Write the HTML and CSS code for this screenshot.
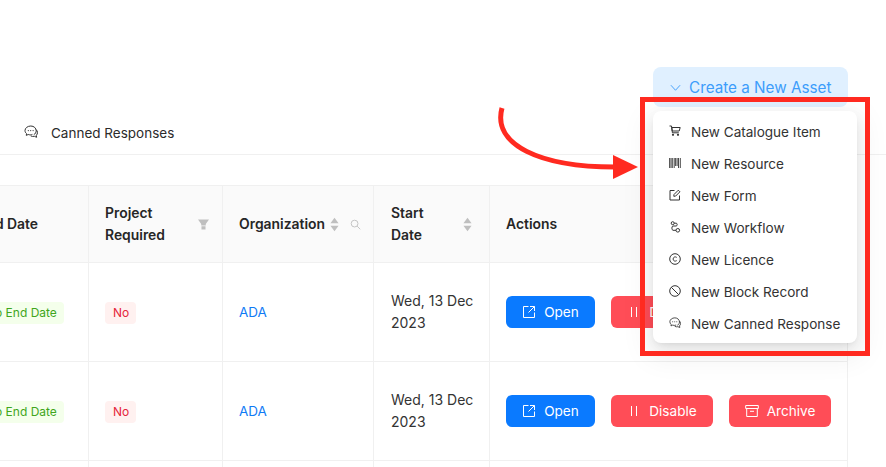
FILE: index.html
```html
<!DOCTYPE html>
<html lang="en">
<head>
<meta charset="utf-8">
<title>Assets</title>
<link rel="stylesheet" href="styles.css">
</head>
<body>
<div class="page">
  <div class="toolbar">
    <button class="create-btn">
      <svg class="chev" viewBox="0 0 12 12"><path d="M1 3.500 6 9l5-5.500"/></svg>
      <span>Create a New Asset</span>
    </button>
  </div>
  <div class="tabs">
    <div class="tab">
      <svg class="ico tab-ico" viewBox="0 0 14 14"><path d="M9.800 9.600C11.400 8.900 12.200 7.400 12.200 5.800 12.200 3.200 10 1 6.800 1S1 3.100 1 5.500c0 1.300.6 2.400 1.500 3.100l-.2 1.800 1.900-.9c1.500.5 3 .4 4.200-.1"/><path d="M12.200 4.700c.8.700 1.300 1.800 1.300 2.900 0 1.100-.5 2-1.200 2.700l.3 2-2.200-1c-1.200.3-2.500.2-3.700-.4"/><path class="dots" d="M4.300 5.600h.01M6.700 5.600h.01M9.100 5.600h.01"/></svg>
      <span>Canned Responses</span>
    </div>
  </div>
  <div class="table-clip">
    <table class="grid">
      <colgroup>
        <col class="c-end"><col class="c-proj"><col class="c-org"><col class="c-start"><col class="c-act">
      </colgroup>
      <thead>
        <tr>
          <th>End Date</th>
          <th>
            <div class="th-flex"><span class="th-wrap">Project Required</span>
              <svg class="funnel" viewBox="0 0 12 12"><path d="M0 .5h12L8.500 5.500v1.500h-5V5.500zM3.800 8h4.400v3.500H3.800z"/></svg>
            </div>
          </th>
          <th>
            <div class="th-flex th-org"><span>Organization</span>
              <svg class="sort" viewBox="0 0 10 16"><path d="M5 .5 9.500 6.500h-9zM5 15.500.5 9.500h9z"/></svg>
              <svg class="search" viewBox="0 0 12 12"><circle cx="5" cy="5" r="3.700"/><path d="m7.800 7.800 3.400 3.400"/></svg>
            </div>
          </th>
          <th class="cell-start">
            <div class="th-flex"><span class="th-wrap">Start Date</span>
              <svg class="sort" viewBox="0 0 10 16"><path d="M5 .5 9.500 6.500h-9zM5 15.500.5 9.500h9z"/></svg>
            </div>
          </th>
          <th>Actions</th>
        </tr>
      </thead>
      <tbody>
        <tr>
          <td><span class="tag tag-green">No End Date</span></td>
          <td><span class="tag tag-red">No</span></td>
          <td><a class="link">ADA</a></td>
          <td class="cell-start">Wed, 13 Dec 2023</td>
          <td>
            <div class="actions">
              <button class="btn btn-blue"><svg class="btn-ico" viewBox="0 0 14 14"><path d="M6.500 1.500h-5v11h11v-5M8 1.500h4.500V6M12.500 1.500 6.500 7.500"/></svg>Open</button>
              <button class="btn btn-red btn-dis"><svg class="btn-ico" viewBox="0 0 14 14"><path d="M4.500 2v10M9.500 2v10"/></svg>Disable</button>
              <button class="btn btn-red btn-arc"><svg class="btn-ico" viewBox="0 0 14 14"><path d="M.7 1.500h12.600v3H.7zM1.700 4.500v8h10.600v-8M5 7.300h4"/></svg>Archive</button>
            </div>
          </td>
        </tr>
        <tr>
          <td><span class="tag tag-green">No End Date</span></td>
          <td><span class="tag tag-red">No</span></td>
          <td><a class="link">ADA</a></td>
          <td class="cell-start">Wed, 13 Dec 2023</td>
          <td>
            <div class="actions">
              <button class="btn btn-blue"><svg class="btn-ico" viewBox="0 0 14 14"><path d="M6.500 1.500h-5v11h11v-5M8 1.500h4.500V6M12.500 1.500 6.500 7.500"/></svg>Open</button>
              <button class="btn btn-red btn-dis"><svg class="btn-ico" viewBox="0 0 14 14"><path d="M4.500 2v10M9.500 2v10"/></svg>Disable</button>
              <button class="btn btn-red btn-arc"><svg class="btn-ico" viewBox="0 0 14 14"><path d="M.7 1.500h12.600v3H.7zM1.700 4.500v8h10.600v-8M5 7.300h4"/></svg>Archive</button>
            </div>
          </td>
        </tr>
        <tr class="row-empty"><td></td><td></td><td></td><td></td><td></td></tr>
      </tbody>
    </table>
  </div>

  <ul class="menu">
    <li class="menu-item"><svg class="ico" viewBox="0 0 12 12"><path d="M.5 1h2l.9 6.800h6.400"/><path d="M2.800 2.500h8.400L10.200 6H3.200z"/><circle class="fill" cx="4" cy="9.800" r="1.100"/><circle class="fill" cx="9" cy="9.800" r="1.100"/></svg>New Catalogue Item</li>
    <li class="menu-item"><svg class="ico barcode" viewBox="0 0 12 12"><path d="M.6 1v10M2 1v10M3.300 1v10M5.200 1v10M6.600 1v8M8.100 1v8M9.500 1v10M11.300 1v10"/></svg>New Resource</li>
    <li class="menu-item"><svg class="ico" viewBox="0 0 12 12"><path d="M5.500 1.500h-4.500v9.500h9.500V6.500"/><path d="M4.800 7.300 5 5.500l4.300-4.300 1.600 1.600L6.600 7.100z"/></svg>New Form</li>
    <li class="menu-item"><svg class="ico" viewBox="0 0 12 12"><circle cx="3.700" cy="2.200" r="1.500"/><circle cx="8.800" cy="9.300" r="1.800"/><path d="M5.200 2.200h2c1.300 0 1.300 2.800 0 2.800H4c-1.500 0-1.500 4.300 0 4.300h3"/></svg>New Workflow</li>
    <li class="menu-item"><svg class="ico" viewBox="0 0 12 12"><circle cx="6" cy="6" r="5.300"/><path d="M7.800 4.600C7 3.500 4.300 3.500 4.200 6c0 2.500 2.800 2.500 3.600 1.400"/></svg>New Licence</li>
    <li class="menu-item"><svg class="ico" viewBox="0 0 12 12"><circle cx="6" cy="6" r="5.300"/><path d="M2.300 2.300 9.700 9.700"/></svg>New Block Record</li>
    <li class="menu-item"><svg class="ico" viewBox="0 0 14 14"><path d="M9.800 9.600C11.400 8.900 12.200 7.400 12.200 5.800 12.200 3.200 10 1 6.800 1S1 3.100 1 5.500c0 1.300.6 2.400 1.500 3.100l-.2 1.800 1.900-.9c1.500.5 3 .4 4.200-.1"/><path d="M12.200 4.700c.8.700 1.300 1.800 1.300 2.900 0 1.100-.5 2-1.200 2.700l.3 2-2.200-1c-1.200.3-2.500.2-3.700-.4"/><path class="dots" d="M4.300 5.600h.01M6.700 5.600h.01M9.100 5.600h.01"/></svg>New Canned Response</li>
  </ul>

  <div class="highlight"></div>
  <svg class="arrow" viewBox="0 0 150 80">
    <path class="arrow-line" d="M7 3C-3 40 45 62 120 62"/>
    <path class="arrow-head" d="M118 50 143 62 118 74z"/>
  </svg>
</div>
</body>
</html>
```

FILE: styles.css
```css
* { box-sizing: border-box; }
html, body { margin: 0; padding: 0; background: #fff; }
body { font-family: Inter, "Liberation Sans", sans-serif; font-size: 14px; color: #333; }
.page { position: relative; width: 886px; height: 467px; overflow: hidden; }

.toolbar { display: flex; justify-content: flex-end; padding: 67px 38px 0 0; }
.create-btn {
  display: flex; align-items: center; gap: 8px; width: 195px; height: 40px; padding: 1px 0 0 17px;
  border: 0; border-radius: 8px; background: #e0f0ff; color: #3d9dfb;
  font: 400 15.250px/24px Inter, sans-serif; white-space: nowrap;
}
.chev { width: 11px; height: 11px; flex: none; fill: none; stroke: #3d9dfb; stroke-width: 1; }

.tabs { height: 48px; border-bottom: 1px solid #f0f0f0; padding: 15px 0 0 24px; }
.tab { display: flex; align-items: center; gap: 13px; height: 22px; line-height: 22px; color: #2b2b2b; font-size: 13.500px; }
.ico { width: 12px; height: 12px; flex: none; fill: none; stroke: #333; stroke-width: 1; }
.tab-ico { width: 14px; height: 14px; position: relative; top: -1px; stroke-width: 1; }
.ico .fill { fill: #333; stroke: none; }
.dots { stroke-linecap: round; stroke-width: 1.200; }
.barcode { stroke-width: .9; }

.table-clip { margin: 30px 0 0 -42px; }
.grid { width: 890px; table-layout: fixed; border-collapse: separate; border-spacing: 0; border-top: 1px solid #f0f0f0; }
.c-end { width: 131px; }
.c-proj { width: 134px; }
.c-org { width: 151px; }
.c-start { width: 116px; }
.c-act { width: 358px; }
th, td { padding: 16px; border-right: 1px solid #f0f0f0; border-bottom: 1px solid #f0f0f0; line-height: 22px; text-align: left; }
th { height: 77px; background: #fafafa; font-weight: 600; font-size: 13.900px; color: #262626; }
td { height: 99px; color: #333; }
th:first-child, td:first-child { padding-left: 20px; }
th.cell-start, td.cell-start { padding-left: 17px; padding-right: 12px; }
.cell-start .th-flex { padding-right: 4px; }
.row-empty td { height: 40px; }

.th-flex { display: flex; align-items: center; justify-content: space-between; }
.th-wrap { display: block; width: 62px; }
.th-org { justify-content: flex-start; }
.sort { width: 9px; height: 15px; flex: none; fill: #bfbfbf; }
.funnel { width: 11px; height: 11px; flex: none; margin-right: -3px; fill: #bfbfbf; }
.th-flex .sort { margin-right: 1px; }
.th-org .sort { margin: 0 0 0 5px; }
.search { width: 11px; height: 11px; flex: none; margin-left: 11px; fill: none; stroke: #bfbfbf; stroke-width: 1; }

.tag { display: inline-block; height: 22px; padding: 0 7px 0 8px; border-radius: 4px; font-size: 12px; line-height: 22px; white-space: nowrap; }
.tag-green { background: #f4ffeb; color: #3fa61c; }
.tag-red { background: #fff1f0; color: #e5243b; }
.link { color: #0f7bf5; font-size: 13.500px; }

.actions { display: flex; gap: 16px; }
.btn {
  display: flex; align-items: center; justify-content: center; gap: 8px; height: 32px; padding: 0;
  border: 0; border-radius: 6px; color: #fff; font: 400 13.600px/22px Inter, sans-serif; white-space: nowrap;
}
.btn-blue { width: 89px; background: #0a7aff; }
.btn-red { background: #ff4d57; }
.btn-dis { width: 102px; }
.btn-arc { width: 102px; }
.btn-ico { width: 14px; height: 14px; flex: none; fill: none; stroke: #fff; stroke-width: 1; }

.menu {
  position: absolute; left: 653px; top: 111px; width: 204px; height: 232px; margin: 0; padding: 5px 0 0; list-style: none;
  background: #fff; border-radius: 8px;
  box-shadow: 0 6px 16px rgba(0,0,0,.08), 0 3px 6px -4px rgba(0,0,0,.12), 0 9px 28px 8px rgba(0,0,0,.05);
}
.menu-item { display: flex; align-items: center; gap: 10px; height: 32px; padding-left: 16px; padding-bottom: 1px; color: #333; line-height: 22px; white-space: nowrap; font-size: 13.550px; }
.menu-item .ico { position: relative; top: -1px; }

.highlight { position: absolute; left: 640px; top: 97px; width: 230px; height: 259px; border: 5px solid #ff2a20; }
.arrow { position: absolute; left: 495px; top: 105px; width: 150px; height: 80px; }
.arrow-line { fill: none; stroke: #ff2a20; stroke-width: 5; }
.arrow-head { fill: #ff2a20; }
```
